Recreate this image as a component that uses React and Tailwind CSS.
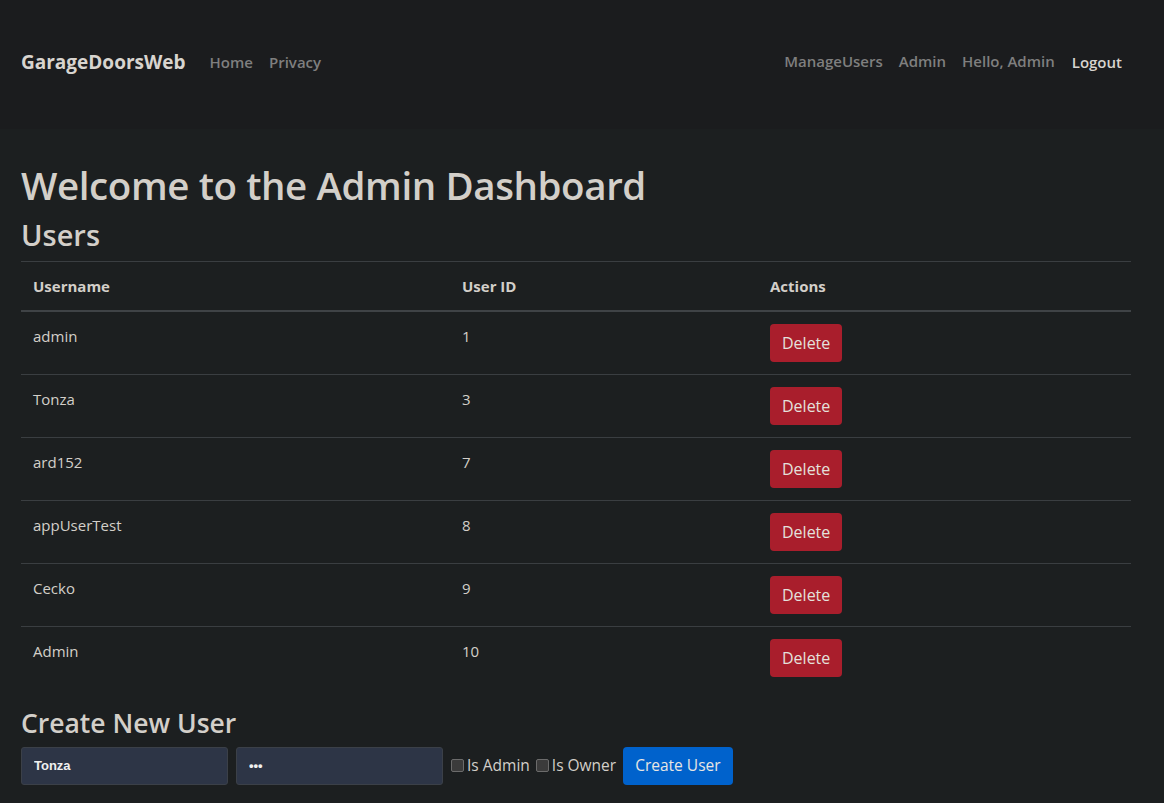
import React, { useState } from 'react';

const users = [
  { name: 'admin', id: 1 },
  { name: 'Tonza', id: 3 },
  { name: 'ard152', id: 7 },
  { name: 'appUserTest', id: 8 },
  { name: 'Cecko', id: 9 },
  { name: 'Admin', id: 10 },
];

const App = () => {
  const [username, setUsername] = useState('Tonza');
  const [password, setPassword] = useState('abc');

  return (
    <div className="min-h-[803px] bg-[#1c1f20] text-[#d3cfc9] font-['Segoe_UI','Open_Sans',sans-serif]">
      {/* Navbar */}
      <nav className="h-[129px] bg-[#1b1c1e] flex items-center justify-between px-[21px] pb-[4px]">
        <div className="flex items-center">
          <span className="text-[19px] font-bold text-[#d8d4cf] mr-[24px]">GarageDoorsWeb</span>
          <a className="text-[15px] font-semibold text-[#7f7f7f] mr-[16px]">Home</a>
          <a className="text-[15px] font-semibold text-[#7f7f7f]">Privacy</a>
        </div>
        <div className="flex items-center pr-[21px]">
          <a className="text-[15px] font-semibold text-[#7f7f7f] mr-[16px] -mt-[2px]">ManageUsers</a>
          <a className="text-[15px] font-semibold text-[#7f7f7f] mr-[16px] -mt-[2px]">Admin</a>
          <span className="text-[15px] font-semibold text-[#7f7f7f] mr-[17px] -mt-[2px]">Hello, Admin</span>
          <button className="text-[15px] font-semibold text-[#d8d4cf]">Logout</button>
        </div>
      </nav>

      <main className="px-[21px] pt-[33px] w-[1152px]">
        <h1 className="text-[38.5px] font-semibold leading-[1.2] mb-[2px] tracking-[-0.4px]">Welcome to the Admin Dashboard</h1>
        <h2 className="text-[29px] font-semibold leading-[1.2] mt-[10px] mb-[8px]">Users</h2>

        <table className="w-[1110px] text-[15px] border-collapse">
          <thead>
            <tr className="border-t border-[#3a3e41] border-b-2 border-b-[#3f4346]">
              <th className="w-[429px] text-left font-bold px-[12px] py-[12px] leading-[24px]">Username</th>
              <th className="w-[308px] text-left font-bold px-[12px] py-[12px] leading-[24px]">User ID</th>
              <th className="text-left font-bold px-[12px] py-[12px] leading-[24px]">Actions</th>
            </tr>
          </thead>
          <tbody>
            {users.map((u) => (
              <tr key={u.id} className="border-b border-[#3a3e41] last:border-b-0">
                <td className="px-[12px] pt-[12px] pb-[12px] align-top leading-[24px]">{u.name}</td>
                <td className="px-[12px] pt-[12px] pb-[12px] align-top leading-[24px]">{u.id}</td>
                <td className="px-[12px] pt-[12px] pb-[12px] align-top">
                  <button className="h-[38px] px-[12px] rounded-[4px] bg-[#a91e2c] text-[#e4e1dc] text-[16px] leading-[24px]">
                    Delete
                  </button>
                </td>
              </tr>
            ))}
          </tbody>
        </table>

        <h2 className="text-[26.5px] font-semibold leading-[1.2] mt-[19px] mb-[7px]">Create New User</h2>
        <form className="flex items-center" onSubmit={(e) => e.preventDefault()}>
          <input
            value={username}
            onChange={(e) => setUsername(e.target.value)}
            className="w-[207px] h-[38px] px-[12px] bg-[#2d3546] border border-[#3b4048] rounded-[3px] text-[13px] font-bold text-[#f0f0f0] outline-none font-['Liberation_Sans',sans-serif] mr-[8px]"
          />
          <input
            type="password"
            value={password}
            onChange={(e) => setPassword(e.target.value)}
            className="w-[207px] h-[38px] px-[12px] bg-[#2d3546] border border-[#3b4048] rounded-[3px] text-[13px] font-bold text-[#f0f0f0] outline-none font-['Liberation_Sans',sans-serif] mr-[8px]"
          />
          <label className="flex items-center text-[15.5px] mr-[6px]">
            <span className="w-[13px] h-[13px] border border-[#6b6b6b] bg-[#3b3b3b] rounded-[2px] mr-[3px]"></span>
            Is Admin
          </label>
          <label className="flex items-center text-[15.5px] mr-[7px]">
            <span className="w-[13px] h-[13px] border border-[#6b6b6b] bg-[#3b3b3b] rounded-[2px] mr-[3px]"></span>
            Is Owner
          </label>
          <button className="h-[38px] px-[12px] rounded-[4px] bg-[#0062cc] text-[#e8e6e3] text-[15.5px]">
            Create User
          </button>
        </form>
      </main>
    </div>
  );
};

export default App;
